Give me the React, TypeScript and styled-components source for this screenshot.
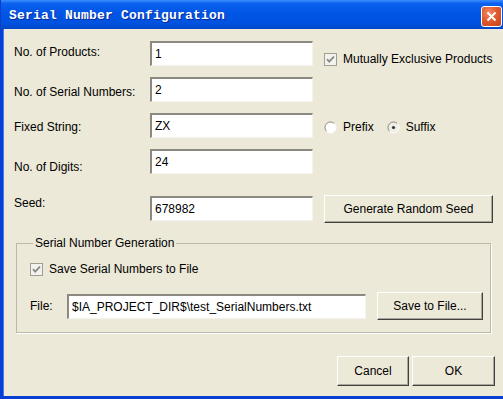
import { FC } from 'react';
import styled, { createGlobalStyle } from 'styled-components';

const GlobalStyle = createGlobalStyle`
	html, body {
		margin: 0;
		padding: 0;
		background: #ece9d8;
	}
	body {
		font-family: "Liberation Sans", Arial, sans-serif;
		font-size: 12px;
		color: #000;
	}
`

const CheckBox: FC = () => (
	<svg width="13" height="13" viewBox="0 0 13 13">
		<rect x="0.5" y="0.5" width="12" height="12" fill="#f3f2ec" stroke="#a09e92" />
		<path d="M3 6.2 L5.2 8.6 L10 3.6" fill="none" stroke="#8a8a84" strokeWidth="1.8" />
	</svg>
);

const Radio: FC<{ checked?: boolean }> = ({ checked }) => (
	<svg width="13" height="13" viewBox="0 0 13 13">
		<circle cx="6.5" cy="6.5" r="5.5" fill={checked ? '#eeede6' : '#fff'} />
		<path d="M2.6 10.4 A5.5 5.5 0 0 1 10.4 2.6" fill="none" stroke="#8a887c" strokeWidth="1" />
		<path d="M10.4 2.6 A5.5 5.5 0 0 1 2.6 10.4" fill="none" stroke="#fff" strokeWidth="1" />
		{checked && <circle cx="6.5" cy="6.5" r="1.6" fill="#333" />}
	</svg>
);

const App: FC = () => {
	return (
		<>
			<GlobalStyle />
			<Window>
				<TitleBar>
					<Title>Serial Number Configuration</Title>
					<CloseButton>
						<svg width="11" height="11" viewBox="0 0 11 11">
							<path d="M1.5 1.5 L9.5 9.5 M9.5 1.5 L1.5 9.5" stroke="#fff" strokeWidth="2" />
						</svg>
					</CloseButton>
				</TitleBar>
				<Frame>
					<Body>
						<Row>
							<Label $pad={4}>No. of Products:</Label>
							<TextBox $w={163}>1</TextBox>
							<Side $pad={11}>
								<Option><CheckBox />Mutually Exclusive Products</Option>
							</Side>
						</Row>
						<Row $top={11}>
							<Label $pad={8}>No. of Serial Numbers:</Label>
							<TextBox $w={163}>2</TextBox>
						</Row>
						<Row $top={11}>
							<Label $pad={7}>Fixed String:</Label>
							<TextBox $w={163}>ZX</TextBox>
							<Side $pad={7}>
								<Option><Radio />Prefix</Option>
								<Option><Radio checked />Suffix</Option>
							</Side>
						</Row>
						<Row $top={11}>
							<Label $pad={11}>No. of Digits:</Label>
							<TextBox $w={163}>24</TextBox>
						</Row>
						<Row $top={22}>
							<Label $pad={0}>Seed:</Label>
							<TextBox $w={163}>678982</TextBox>
							<Side $pad={0}>
								<Button $w={169} $h={28} $lift>Generate Random Seed</Button>
							</Side>
						</Row>
						<Group>
							<Legend>Serial Number Generation</Legend>
							<Option><CheckBox />Save Serial Numbers to File</Option>
							<FileRow>
								<FileLabel>File:</FileLabel>
								<TextBox $w={299}>$IA_PROJECT_DIR$\test_SerialNumbers.txt</TextBox>
								<Button $w={106} $h={28}>Save to File...</Button>
							</FileRow>
						</Group>
						<Footer>
							<Button $w={72} $h={30}>Cancel</Button>
							<Button $w={83} $h={30}>OK</Button>
						</Footer>
					</Body>
				</Frame>
			</Window>
		</>
	);
};

export default App;

const Window = styled.div`
	width: 503px;
	height: 399px;
	display: flex;
	flex-direction: column;
	overflow: hidden;
	background: #ece9d8;
`

const TitleBar = styled.div`
	height: 29px;
	flex: none;
	display: flex;
	align-items: center;
	justify-content: space-between;
	padding: 0 1px 0 8px;
	box-sizing: border-box;
	background: linear-gradient(to bottom, #3d8fff 0%, #0b61ee 12%, #0055e5 45%, #0052df 80%, #0146c6 100%);
	border-left: 1px solid #0a3ec8;
`

const Title = styled.span`
	font-family: "Liberation Mono", "Courier New", monospace;
	font-weight: bold;
	font-size: 13px;
	letter-spacing: 0.2px;
	color: #fff;
	text-shadow: 1px 1px 0 #0a2a9a;
	padding-top: 2px;
`

const CloseButton = styled.div`
	width: 21px;
	height: 21px;
	box-sizing: border-box;
	border: 1px solid #fff;
	border-radius: 3px;
	background: radial-gradient(circle at 35% 30%, #f08a64 0%, #e25a30 45%, #c3421a 100%);
	display: flex;
	align-items: center;
	justify-content: center;
	margin-top: 4px;
`

const Frame = styled.div`
	flex: 1;
	display: flex;
	border-left: 3px solid #0a3fd4;
	border-bottom: 3px solid #0a3fd4;
	box-shadow: inset 1px 0 0 #3c7ef0;
`

const Body = styled.div`
	flex: 1;
	display: flex;
	flex-direction: column;
	padding: 12px 0 0 11px;
`

const Row = styled.div<{ $top?: number }>`
	display: flex;
	align-items: flex-start;
	height: 25px;
	margin-top: ${p => p.$top ?? 0}px;
`

const Label = styled.div<{ $pad: number }>`
	width: 136px;
	flex: none;
	line-height: 14px;
	padding-top: ${p => p.$pad}px;
`

const TextBox = styled.div<{ $w: number }>`
	width: ${p => p.$w}px;
	height: 25px;
	flex: none;
	box-sizing: border-box;
	background: #fff;
	border-style: solid;
	border-width: 2px 1px 1px 2px;
	border-color: #8c8a80 #f4f3ee #f4f3ee #8c8a80;
	padding-left: 3px;
	display: flex;
	align-items: center;
	white-space: nowrap;
	overflow: hidden;
`

const Side = styled.div<{ $pad: number }>`
	display: flex;
	gap: 13px;
	margin-left: 11px;
	padding-top: ${p => p.$pad}px;
`

const Option = styled.label`
	display: flex;
	align-items: center;
	gap: 6px;
	line-height: 14px;
`

const Button = styled.div<{ $w: number; $h: number; $lift?: boolean }>`
	width: ${p => p.$w}px;
	height: ${p => p.$h}px;
	flex: none;
	box-sizing: border-box;
	display: flex;
	align-items: center;
	justify-content: center;
	background: #ece9d8;
	border-style: solid;
	border-width: 1px;
	border-color: #fff #404040 #404040 #fff;
	box-shadow: inset -1px -1px 0 #aca899;
	margin-top: ${p => (p.$lift ? -1 : 0)}px;
`

const Group = styled.fieldset`
	width: 475px;
	box-sizing: border-box;
	margin: 15px 0 0 2px;
	padding: 12px 0 12px 13px;
	border: 1px solid #bcb9aa;
	box-shadow: 1px 1px 0 #fff;
	display: flex;
	flex-direction: column;
`

const Legend = styled.legend`
	padding: 0 2px;
	margin-left: 3px;
	line-height: 14px;
`

const FileRow = styled.div`
	display: flex;
	align-items: center;
	gap: 11px;
	margin-top: 16px;
	height: 28px;
`

const FileLabel = styled.div`
	width: 26px;
	flex: none;
`

const Footer = styled.div`
	display: flex;
	justify-content: flex-end;
	gap: 3px;
	padding-right: 8px;
	margin-top: 23px;
`
